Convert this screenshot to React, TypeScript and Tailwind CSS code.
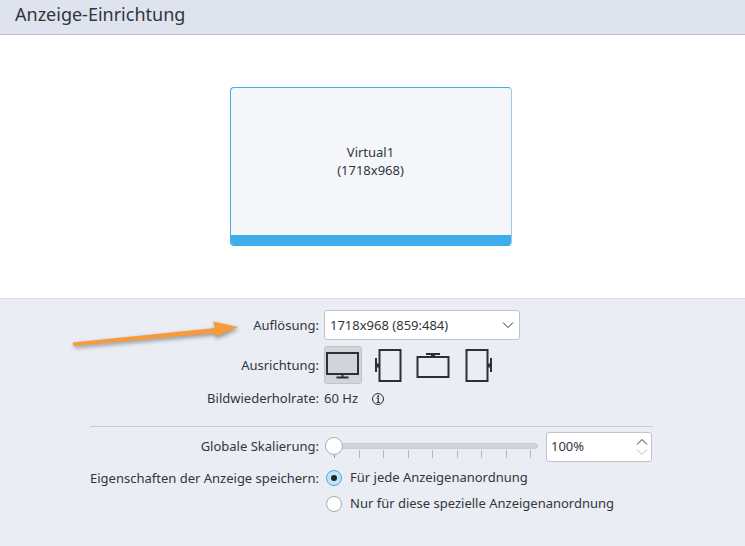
import React from 'react';

const ink = '#2b3035';

const App: React.FC = () => {
  return (
    <div className="relative w-[745px] h-[546px] overflow-hidden bg-white text-[13px] text-[#31363b]" style={{ fontFamily: '"Noto Sans", sans-serif' }}>
      <header className="h-[35px] bg-[#dee3ed] border-b border-[#bcc2d0] pl-[15px] text-[18px] leading-[29px]">
        Anzeige-Einrichtung
      </header>

      <div className="h-[264px] flex justify-center pt-[52px] border-b border-[#d9dce3]">
        <div className="w-[282px] h-[159px] ml-[-4px] rounded-[4px] border border-[#3daee9] border-r-[#93cee9] bg-[#f4f6fa] flex flex-col overflow-hidden">
          <div className="flex-1 flex flex-col items-center justify-center leading-[18px] pb-[2px]">
            <span>Virtual1</span>
            <span>(1718x968)</span>
          </div>
          <div className="h-[10px] bg-[#3daee9]" />
        </div>
      </div>

      <div className="h-[247px] bg-[#eaedf3] pt-[11px]">
        <div className="grid grid-cols-[319px_1fr] gap-x-[5px] items-center">
          <label className="text-right pt-[2px]">Auflösung:</label>
          <div className="w-[196px] h-[30px] rounded-[3px] bg-white border border-[#c0c3c9] flex items-center justify-between pl-[5px] pr-[3px] pt-[2px]">
            <span>1718x968 (859:484)</span>
            <svg className="mt-[-2px]" width="16" height="16" viewBox="0 0 16 16" fill="none" stroke={ink} strokeWidth="1">
              <path d="M3 5.500 L8 10.500 L13 5.500" />
            </svg>
          </div>

          <label className="text-right mt-[6px] pt-[2px]">Ausrichtung:</label>
          <div className="mt-[6px] flex items-center gap-[8px] h-[38px]">
            <div className="w-[38px] h-[38px] rounded-[3px] bg-[#d1d4d9] border border-[#c0c3c9]">
              <svg width="36" height="36" viewBox="0 0 36 36" fill="none" stroke={ink} strokeWidth="2">
                <rect x="2" y="6" width="31" height="21" />
                <path d="M17.500 27v3.500M11.500 30.500h12" />
              </svg>
            </div>
            <svg width="38" height="38" viewBox="0 0 38 38" fill="none" stroke={ink} strokeWidth="2">
              <rect x="9.500" y="4" width="21" height="31" />
              <path d="M6 12v14" />
              <path d="M6 19.500h4" strokeWidth="4" />
            </svg>
            <svg width="38" height="38" viewBox="0 0 38 38" fill="none" stroke={ink} strokeWidth="2">
              <rect x="1.500" y="11" width="31" height="20" />
              <path d="M10 8h14" />
              <path d="M17 8v3" strokeWidth="4" />
            </svg>
            <svg width="38" height="38" viewBox="0 0 38 38" fill="none" stroke={ink} strokeWidth="2">
              <rect x="4.500" y="4" width="21" height="31" />
              <path d="M29 12v14" />
              <path d="M25 19.500h4" strokeWidth="4" />
            </svg>
          </div>

          <label className="text-right mt-[5px]">Bildwiederholrate:</label>
          <div className="mt-[5px] h-[20px] flex items-center gap-[13px]">
            <span>60 Hz</span>
            <svg width="14" height="14" viewBox="0 0 14 14" fill="none" stroke={ink}>
              <circle cx="7" cy="7" r="5.500" />
              <path d="M5.500 6h1.800v4M5.500 10.500h3.500" strokeWidth="1.200" />
              <path d="M7.200 3.300v1.600" strokeWidth="1.600" />
            </svg>
          </div>
        </div>

        <div className="ml-[90px] w-[563px] mt-[17px] border-t border-[#c8ccd3]" />

        <div className="grid grid-cols-[319px_1fr] gap-x-[5px] items-center mt-[5px]">
          <label className="text-right">Globale Skalierung:</label>
          <div className="flex items-center gap-[8px]">
            <div className="relative w-[214px] h-[30px]">
              <div className="absolute left-[2px] right-0 top-[11px] h-[6px] rounded-full bg-[#d1d4d9] border border-[#c8ccd3]" />
              <div className="absolute left-[10px] w-[197px] top-[18px] h-[8px] flex justify-between">
                {Array.from({ length: 9 }).map((_, i) => (
                  <span key={i} className={i === 0 ? 'w-px h-[8px] bg-[#3daee9]' : 'w-px h-[8px] bg-[#b4b8be]'} />
                ))}
              </div>
              <div className="absolute left-[1px] top-[5px] w-[18px] h-[18px] rounded-full bg-white border border-[#a9adb3]" />
            </div>
            <div className="w-[106px] h-[30px] rounded-[3px] bg-white border border-[#c0c3c9] flex items-center justify-between pl-[4px] pr-[3px]">
              <span>100%</span>
              <div className="flex flex-col items-center">
                <svg width="12" height="10" viewBox="0 0 12 10" fill="none" stroke={ink}>
                  <path d="M1 7.500 L6 2.500 L11 7.500" />
                </svg>
                <svg width="12" height="10" viewBox="0 0 12 10" fill="none" stroke="#b4b8be">
                  <path d="M1 2.500 L6 7.500 L11 2.500" />
                </svg>
              </div>
            </div>
          </div>

          <label className="text-right mt-[3px] h-[26px] leading-[26px]">Eigenschaften der Anzeige speichern:</label>
          <div className="mt-[3px] h-[26px] flex items-center gap-[8px]">
            <span className="ml-[2px] w-[16px] h-[16px] rounded-full bg-[#c4e3f5] border border-[#3daee9] flex items-center justify-center">
              <span className="w-[6px] h-[6px] rounded-full bg-[#232629]" />
            </span>
            <span>Für jede Anzeigenanordnung</span>
          </div>

          <span />
          <div className="h-[26px] flex items-center gap-[8px]">
            <span className="ml-[2px] w-[16px] h-[16px] rounded-full bg-white border border-[#a9adb3]" />
            <span>Nur für diese spezielle Anzeigenanordnung</span>
          </div>
        </div>
      </div>

      <svg className="absolute left-[70px] top-[318px] drop-shadow-[1px_2px_2px_rgba(0,0,0,0.4)]" width="175" height="34" viewBox="0 0 175 34" fill="none">
        <path d="M3 24.500 L145 10 L143 3.500 L168 9 L145 19 L145 15 L4 28 Q2 26 3 24.500 Z" fill="#f79a3c" />
      </svg>
    </div>
  );
};

export default App;
